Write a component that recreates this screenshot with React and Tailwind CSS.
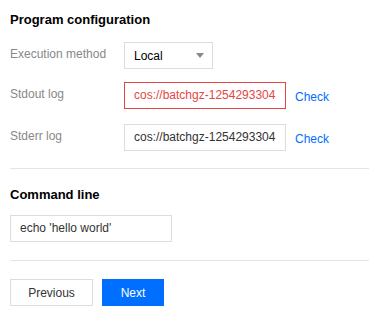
import React from 'react';

const labelCls = 'w-[114px] shrink-0 text-[12px] text-[#888] pt-[3px]';
const inputCls = 'h-[27px] w-[162px] border px-[9px] text-[12px] leading-[25px] overflow-hidden whitespace-nowrap';

function FieldRow({ label, children, className = '' }) {
  return (
    <div className={`flex items-start ${className}`}>
      <div className={labelCls}>{label}</div>
      {children}
    </div>
  );
}

export default function App() {
  return (
    <div
      className="w-[369px] h-[318px] bg-white pl-[10px] text-[#333] overflow-hidden"
      style={{ fontFamily: '"Liberation Sans", Arial, sans-serif' }}
    >
      {/* Program configuration */}
      <h2 className="pt-[12px] text-[13px] font-bold text-black leading-[16px]">Program configuration</h2>

      <FieldRow label="Execution method" className="mt-[14px]">
        <div className="h-[27px] w-[89px] border border-[#ddd] pl-[9px] pr-[8px] flex items-center justify-between text-[12px] text-black">
          <span>Local</span>
          <svg width="8" height="5" viewBox="0 0 8 5">
            <path d="M0 0 L8 0 L4 5 Z" fill="#888" />
          </svg>
        </div>
      </FieldRow>

      <FieldRow label="Stdout log" className="mt-[13px]">
        <div className={`${inputCls} border-[#e54545] text-[#e54545]`}>cos://batchgz-1254293304</div>
        <a className="ml-[9px] text-[12px] text-[#006eff] pt-[6px]">Check</a>
      </FieldRow>

      <FieldRow label="Stderr log" className="mt-[15px]">
        <div className={`${inputCls} border-[#ddd] text-[#333]`}>cos://batchgz-1254293304</div>
        <a className="ml-[9px] text-[12px] text-[#006eff] pt-[6px]">Check</a>
      </FieldRow>

      <div className="mt-[17px] border-t border-[#e5e5e5]" />

      {/* Command line */}
      <h2 className="mt-[18px] text-[13px] font-bold text-black leading-[16px]">Command line</h2>
      <div className={`${inputCls} mt-[12px] border-[#ddd] text-[#333]`}>echo 'hello world'</div>

      <div className="mt-[18px] border-t border-[#e5e5e5]" />

      <div className="mt-[18px] flex gap-[9px]">
        <button className="h-[27px] w-[83px] border border-[#ddd] bg-white text-[12px] text-[#333]">Previous</button>
        <button className="h-[27px] w-[62px] bg-[#006eff] text-[12px] text-white">Next</button>
      </div>
    </div>
  );
}
